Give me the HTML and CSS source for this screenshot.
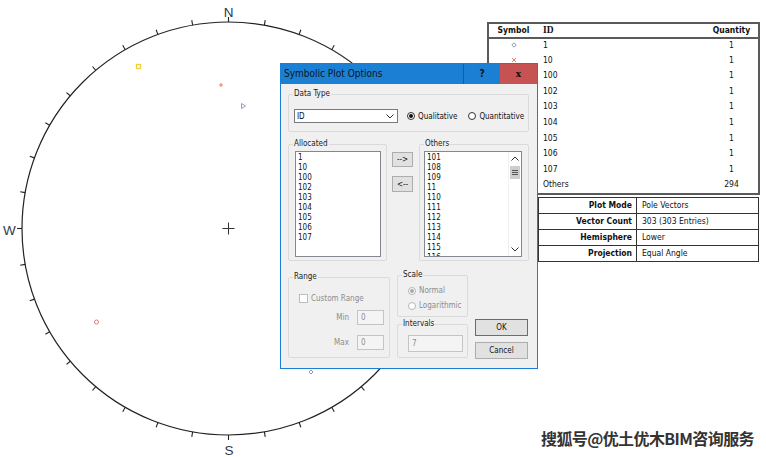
FILE: index.html
```html
<!DOCTYPE html>
<html>
<head>
<meta charset="utf-8">
<link rel="stylesheet" href="styles.css">
</head>
<body>
<div class="stage">
  <svg class="net" width="766" height="457" viewBox="0 0 766 457">
    <circle cx="228.5" cy="228.5" r="206.5" class="prim"/>
    <g class="ticks" transform="translate(228.5 228.5)">
      <line y1="-206.5" y2="-211.5" transform="rotate(0)"/><line y1="-206.5" y2="-211.5" transform="rotate(10)"/><line y1="-206.5" y2="-211.5" transform="rotate(20)"/><line y1="-206.5" y2="-211.5" transform="rotate(30)"/><line y1="-206.5" y2="-211.5" transform="rotate(40)"/><line y1="-206.5" y2="-211.5" transform="rotate(50)"/><line y1="-206.5" y2="-211.5" transform="rotate(60)"/><line y1="-206.5" y2="-211.5" transform="rotate(70)"/><line y1="-206.5" y2="-211.5" transform="rotate(80)"/><line y1="-206.5" y2="-211.5" transform="rotate(90)"/><line y1="-206.5" y2="-211.5" transform="rotate(100)"/><line y1="-206.5" y2="-211.5" transform="rotate(110)"/><line y1="-206.5" y2="-211.5" transform="rotate(120)"/><line y1="-206.5" y2="-211.5" transform="rotate(130)"/><line y1="-206.5" y2="-211.5" transform="rotate(140)"/><line y1="-206.5" y2="-211.5" transform="rotate(150)"/><line y1="-206.5" y2="-211.5" transform="rotate(160)"/><line y1="-206.5" y2="-211.5" transform="rotate(170)"/><line y1="-206.5" y2="-211.5" transform="rotate(180)"/><line y1="-206.5" y2="-211.5" transform="rotate(190)"/><line y1="-206.5" y2="-211.5" transform="rotate(200)"/><line y1="-206.5" y2="-211.5" transform="rotate(210)"/><line y1="-206.5" y2="-211.5" transform="rotate(220)"/><line y1="-206.5" y2="-211.5" transform="rotate(230)"/><line y1="-206.5" y2="-211.5" transform="rotate(240)"/><line y1="-206.5" y2="-211.5" transform="rotate(250)"/><line y1="-206.5" y2="-211.5" transform="rotate(260)"/><line y1="-206.5" y2="-211.5" transform="rotate(270)"/><line y1="-206.5" y2="-211.5" transform="rotate(280)"/><line y1="-206.5" y2="-211.5" transform="rotate(290)"/><line y1="-206.5" y2="-211.5" transform="rotate(300)"/><line y1="-206.5" y2="-211.5" transform="rotate(310)"/><line y1="-206.5" y2="-211.5" transform="rotate(320)"/><line y1="-206.5" y2="-211.5" transform="rotate(330)"/><line y1="-206.5" y2="-211.5" transform="rotate(340)"/><line y1="-206.5" y2="-211.5" transform="rotate(350)"/>
      <line x1="-6" x2="6" class="cross"/><line y1="-6" y2="6" class="cross"/>
    </g>
    <text x="228.7" y="16.7" class="dir" text-anchor="middle">N</text>
    <text x="3" y="235" class="dir">W</text>
    <text x="229" y="455" class="dir" text-anchor="middle">S</text>
    <rect x="136.5" y="64.5" width="4" height="4" class="m-yellow"/>
    <path d="M219 85H223M221 83V87" class="m-red"/>
    <path d="M241.5 103.5V108.5L245.5 106Z" class="m-blue"/>
    <circle cx="96.5" cy="322" r="2" class="m-pink"/>
    <path d="M311 370L313 372L311 374L309 372Z" class="m-slate"/>
  </svg>

  <div class="side">
    <table class="legend">
      <thead>
        <tr><th class="c-sym">Symbol</th><th class="c-id">ID</th><th class="c-qty">Quantity</th></tr>
      </thead>
      <tbody>
        <tr><td class="c-sym"><svg width="6" height="6" viewBox="0 0 6 6"><path d="M3 0.8L5.2 3L3 5.2L0.8 3Z" class="m-slate"/></svg></td><td>1</td><td class="c-qty">1</td></tr>
        <tr><td class="c-sym"><svg width="6" height="6" viewBox="0 0 6 6"><path d="M1 1L5 5M5 1L1 5" class="m-red"/></svg></td><td>10</td><td class="c-qty">1</td></tr>
        <tr><td class="c-sym"></td><td>100</td><td class="c-qty">1</td></tr>
        <tr><td class="c-sym"></td><td>102</td><td class="c-qty">1</td></tr>
        <tr><td class="c-sym"></td><td>103</td><td class="c-qty">1</td></tr>
        <tr><td class="c-sym"></td><td>104</td><td class="c-qty">1</td></tr>
        <tr><td class="c-sym"></td><td>105</td><td class="c-qty">1</td></tr>
        <tr><td class="c-sym"></td><td>106</td><td class="c-qty">1</td></tr>
        <tr><td class="c-sym"></td><td>107</td><td class="c-qty">1</td></tr>
        <tr><td class="c-sym"></td><td>Others</td><td class="c-qty">294</td></tr>
      </tbody>
    </table>
    <table class="info">
      <tr><th>Plot Mode</th><td>Pole Vectors</td></tr>
      <tr><th>Vector Count</th><td>303 (303 Entries)</td></tr>
      <tr><th>Hemisphere</th><td>Lower</td></tr>
      <tr><th>Projection</th><td>Equal Angle</td></tr>
    </table>
  </div>

  <div class="dialog">
    <div class="titlebar">
      <span class="title">Symbolic Plot Options</span>
      <span class="tb-btn help">?</span>
      <span class="tb-btn close">x</span>
    </div>
    <div class="dlg-body">
      <fieldset class="grp grp-type">
        <legend>Data Type</legend>
        <div class="type-row">
          <div class="combo"><span>ID</span><svg width="8" height="5" viewBox="0 0 8 5"><path d="M0.5 0.5L4 4L7.5 0.5" class="chev"/></svg></div>
          <span class="radio"><span class="rdot on"></span>Qualitative</span>
          <span class="radio"><span class="rdot"></span>Quantitative</span>
        </div>
      </fieldset>

      <div class="lists">
        <fieldset class="grp grp-alloc">
          <legend>Allocated</legend>
          <div class="listbox">
            <div class="items">
              <div>1</div><div>10</div><div>100</div><div>102</div><div>103</div><div>104</div><div>105</div><div>106</div><div>107</div>
            </div>
          </div>
        </fieldset>
        <div class="movebtns">
          <button class="btn mv1">--&gt;</button>
          <button class="btn mv2">&lt;--</button>
        </div>
        <fieldset class="grp grp-others">
          <legend>Others</legend>
          <div class="listbox scrolled">
            <div class="items">
              <div>101</div><div>108</div><div>109</div><div>11</div><div>110</div><div>111</div><div>112</div><div>113</div><div>114</div><div>115</div><div>116</div>
            </div>
            <div class="vscroll">
              <span class="arrow"><svg width="8" height="5" viewBox="0 0 8 5"><path d="M0.5 4.5L4 1L7.5 4.5" class="chev"/></svg></span>
              <span class="thumb"><svg width="6" height="5" viewBox="0 0 6 5"><path d="M0 0.5H6M0 2.5H6M0 4.5H6" class="grip"/></svg></span>
              <span class="track"></span>
              <span class="arrow"><svg width="8" height="5" viewBox="0 0 8 5"><path d="M0.5 0.5L4 4L7.5 0.5" class="chev"/></svg></span>
            </div>
          </div>
        </fieldset>
      </div>

      <div class="bottom">
        <fieldset class="grp grp-range">
          <legend>Range</legend>
          <div class="chk-row"><span class="chk"></span>Custom Range</div>
          <div class="mm-row mm-min"><span class="mm-lbl">Min</span><span class="tbox small">0</span></div>
          <div class="mm-row mm-max"><span class="mm-lbl">Max</span><span class="tbox small">0</span></div>
        </fieldset>
        <div class="midcol">
          <fieldset class="grp grp-scale">
            <legend>Scale</legend>
            <div class="radio dis"><span class="rdot on dis"></span>Normal</div>
            <div class="radio dis"><span class="rdot dis"></span>Logarithmic</div>
          </fieldset>
          <fieldset class="grp grp-int">
            <legend>Intervals</legend>
            <span class="tbox wide">7</span>
          </fieldset>
        </div>
        <div class="btncol">
          <button class="btn ok">OK</button>
          <button class="btn">Cancel</button>
        </div>
      </div>
    </div>
  </div>

  <div class="watermark">搜狐号@优土优木BIM咨询服务</div>
</div>
</body>
</html>
```

FILE: styles.css
```css
* { box-sizing: border-box; }
html, body { margin: 0; padding: 0; background: #fff; }
.stage {
  position: relative;
  width: 766px;
  height: 457px;
  overflow: hidden;
  font-family: "DejaVu Sans Condensed", "DejaVu Sans", sans-serif;
  font-stretch: condensed;
}
.net { position: absolute; left: 0; top: 0; }
.prim { fill: none; stroke: #222; stroke-width: 1.2; }
.ticks line { stroke: #222; stroke-width: 1.1; }
.ticks .cross { stroke: #333; stroke-width: 1; }
.dir { font-family: "Liberation Sans", Arial, sans-serif; font-size: 13.5px; fill: #2d3a4c; }
.m-yellow { fill: none; stroke: #f2cf3a; stroke-width: 1.3; }
.m-red { fill: none; stroke: #f07a5a; stroke-width: 1; }
.m-blue { fill: none; stroke: #8b9fd0; stroke-width: 1; }
.m-pink { fill: none; stroke: #f07474; stroke-width: 1; }
.m-slate { fill: none; stroke: #8f95b5; stroke-width: 1; }

/* right side panels */
.side {
  position: absolute;
  left: 487px;
  top: 22px;
  width: 273px;
  display: flex;
  flex-direction: column;
  align-items: flex-end;
  gap: 2px;
  font-size: 8.5px;
  color: #111;
}
.legend {
  width: 273px;
  border-collapse: collapse;
  border: 2px solid #5a5a5a;
  background: #fff;
}
.legend th {
  height: 15px;
  font-weight: bold;
  padding: 0;
  border-bottom: 2px solid #5a5a5a;
  line-height: 9px;
}
.legend th.c-id { text-align: left; padding-left: 5px; font-family: "Liberation Serif", serif; font-size: 9.5px; }
.legend td {
  height: 15.6px;
  padding: 2px 0 0 5px;
  line-height: 9px;
  vertical-align: top;
}
.legend .c-sym { width: 50px; text-align: center; padding-left: 0; }
.legend .c-qty { width: 54px; text-align: center; padding-left: 0; }
.legend td.c-sym svg { display: block; margin: 1px auto 0; }

.info {
  width: 221px;
  margin-right: 1px;
  border-collapse: collapse;
  border: 1px solid #333;
  background: #fff;
}
.info th, .info td {
  border: 1px solid #333;
  height: 16px;
  padding: 0;
  line-height: 14px;
}
.info th { width: 98px; text-align: right; padding-right: 4px; font-weight: bold; }
.info td { padding-left: 5px; }

/* dialog window */
.dialog {
  position: absolute;
  left: 280px;
  top: 63px;
  width: 258px;
  height: 306px;
  border: 1px solid #1a7ed6;
  background: #f0f0f0;
  font-size: 8px;
  color: #111;
}
.titlebar {
  display: flex;
  height: 20px;
  background: #1b7fd3;
}
.title {
  flex: 1;
  padding-left: 3px;
  font-size: 10px;
  line-height: 20px;
  color: #0b1522;
}
.tb-btn {
  width: 37px;
  text-align: center;
  font-weight: bold;
  font-size: 10px;
  line-height: 20px;
  color: #111;
}
.help { border-left: 1px solid #135fa3; }
.close { background: #c75252; font-family: "DejaVu Serif", serif; font-size: 10px; }

.dlg-body { padding: 5px 8px 0 7px; }

.grp {
  margin: 0;
  border: 1px solid #dadada;
  border-radius: 2px;
  min-width: 0;
}
.grp legend {
  padding: 0 1px;
  line-height: 10px;
  height: 10px;
  font-size: 8px;
  color: #1a1a1a;
}
.grp-type { padding: 10px 0 8px 5px; }
.grp-type legend { margin-left: -1px; }
.type-row { display: flex; align-items: center; height: 14px; }
.combo {
  width: 104px;
  height: 14px;
  border: 1px solid #7a7a7a;
  background: #fff;
  display: flex;
  align-items: center;
  justify-content: space-between;
  padding: 0 3px 0 2px;
}
.chev { fill: none; stroke: #333; stroke-width: 1; }
.radio { display: flex; align-items: center; gap: 3px; }
.type-row .radio { margin-left: 9px; }
.type-row .radio + .radio { margin-left: 11px; }
.rdot {
  width: 8px;
  height: 8px;
  border: 1px solid #333;
  border-radius: 50%;
  background: #fff;
  display: flex;
  align-items: center;
  justify-content: center;
}
.rdot.on::after {
  content: "";
  width: 4px;
  height: 4px;
  border-radius: 50%;
  background: #111;
}
.rdot.dis { border-color: #b5b5b5; }
.rdot.on.dis::after { background: #a8a8a8; }
.radio.dis { color: #8d8d8d; }

.lists { display: flex; margin-top: 7px; }
.grp-alloc { width: 99px; padding: 2px 5px 3px 6px; }
.grp-alloc legend { margin-left: -2px; }
.grp-others { width: 110px; padding: 2px 6px 3px 4px; margin-left: 6px; }
.grp-others legend { margin-left: 0; }
.listbox {
  height: 106px;
  border: 1px solid #828790;
  background: #fff;
  display: flex;
  overflow: hidden;
}
.items {
  flex: 1;
  padding: 1px 0 0 2px;
  line-height: 10px;
  font-size: 8px;
  overflow: hidden;
}
.vscroll {
  width: 13px;
  display: flex;
  flex-direction: column;
  background: #fff;
  border-left: 1px solid #f0f0f0;
}
.vscroll .arrow { height: 13px; display: flex; align-items: center; justify-content: center; }
.vscroll .track { flex: 1; }
.vscroll .thumb {
  height: 13px;
  margin: 1px 1px 0;
  background: #cdcdcd;
  display: flex;
  align-items: center;
  justify-content: center;
}
.grip { stroke: #555; stroke-width: 1; }

.movebtns {
  display: flex;
  flex-direction: column;
  margin-left: 5px;
  padding-top: 13px;
  gap: 9px;
}
.btn {
  margin: 0;
  padding: 0;
  font-family: inherit;
  font-stretch: condensed;
  font-size: 8px;
  color: #111;
  background: #e1e1e1;
  border: 1px solid #adadad;
  border-radius: 0;
}
.mv1 { width: 21px; height: 15px; }
.mv2 { width: 21px; height: 16px; }

.bottom { display: flex; align-items: flex-start; }
.grp-range {
  width: 102px;
  margin-top: 11px;
  height: 86px;
  padding: 11px 5px 0 10px;
}
.grp-range legend, .grp-scale legend, .grp-int legend { margin-left: -6px; }
.chk-row { display: flex; align-items: center; height: 11px; gap: 3px; color: #8d8d8d; }
.chk { width: 9px; height: 9px; border: 1px solid #bcbcbc; background: #fff; }
.mm-row { display: flex; justify-content: flex-end; align-items: center; gap: 8px; color: #8d8d8d; }
.mm-min { margin-top: 6px; }
.mm-max { margin-top: 10px; }
.tbox {
  display: flex;
  align-items: center;
  border: 1px solid #c4c4c4;
  background: #f4f4f4;
  color: #8d8d8d;
  padding-left: 3px;
}
.tbox.small { width: 27px; height: 15px; }
.tbox.wide { width: 55px; height: 17px; }

.midcol { width: 71px; margin-left: 7px; display: flex; flex-direction: column; }
.grp-scale { margin-top: 9px; padding: 3px 0 3px 10px; }
.grp-scale .radio { height: 15px; }
.grp-int { margin-top: 2px; padding: 6px 4px 5px 10px; }

.btncol {
  width: 53px;
  margin-left: 7px;
  padding-top: 58px;
  display: flex;
  flex-direction: column;
  gap: 6px;
}
.btncol .btn { width: 53px; height: 17px; }
.btn.ok { border-color: #2a7ad0; }

.watermark {
  position: absolute;
  left: 541px;
  top: 428px;
  font-family: "Noto Sans CJK SC", sans-serif;
  font-weight: bold;
  font-size: 16px;
  line-height: 20px;
  color: #333;
  letter-spacing: -0.6px;
  text-shadow: 1px 0 0 #fff, -1px 0 0 #fff, 0 1px 0 #fff, 0 -1px 0 #fff;
}
```
